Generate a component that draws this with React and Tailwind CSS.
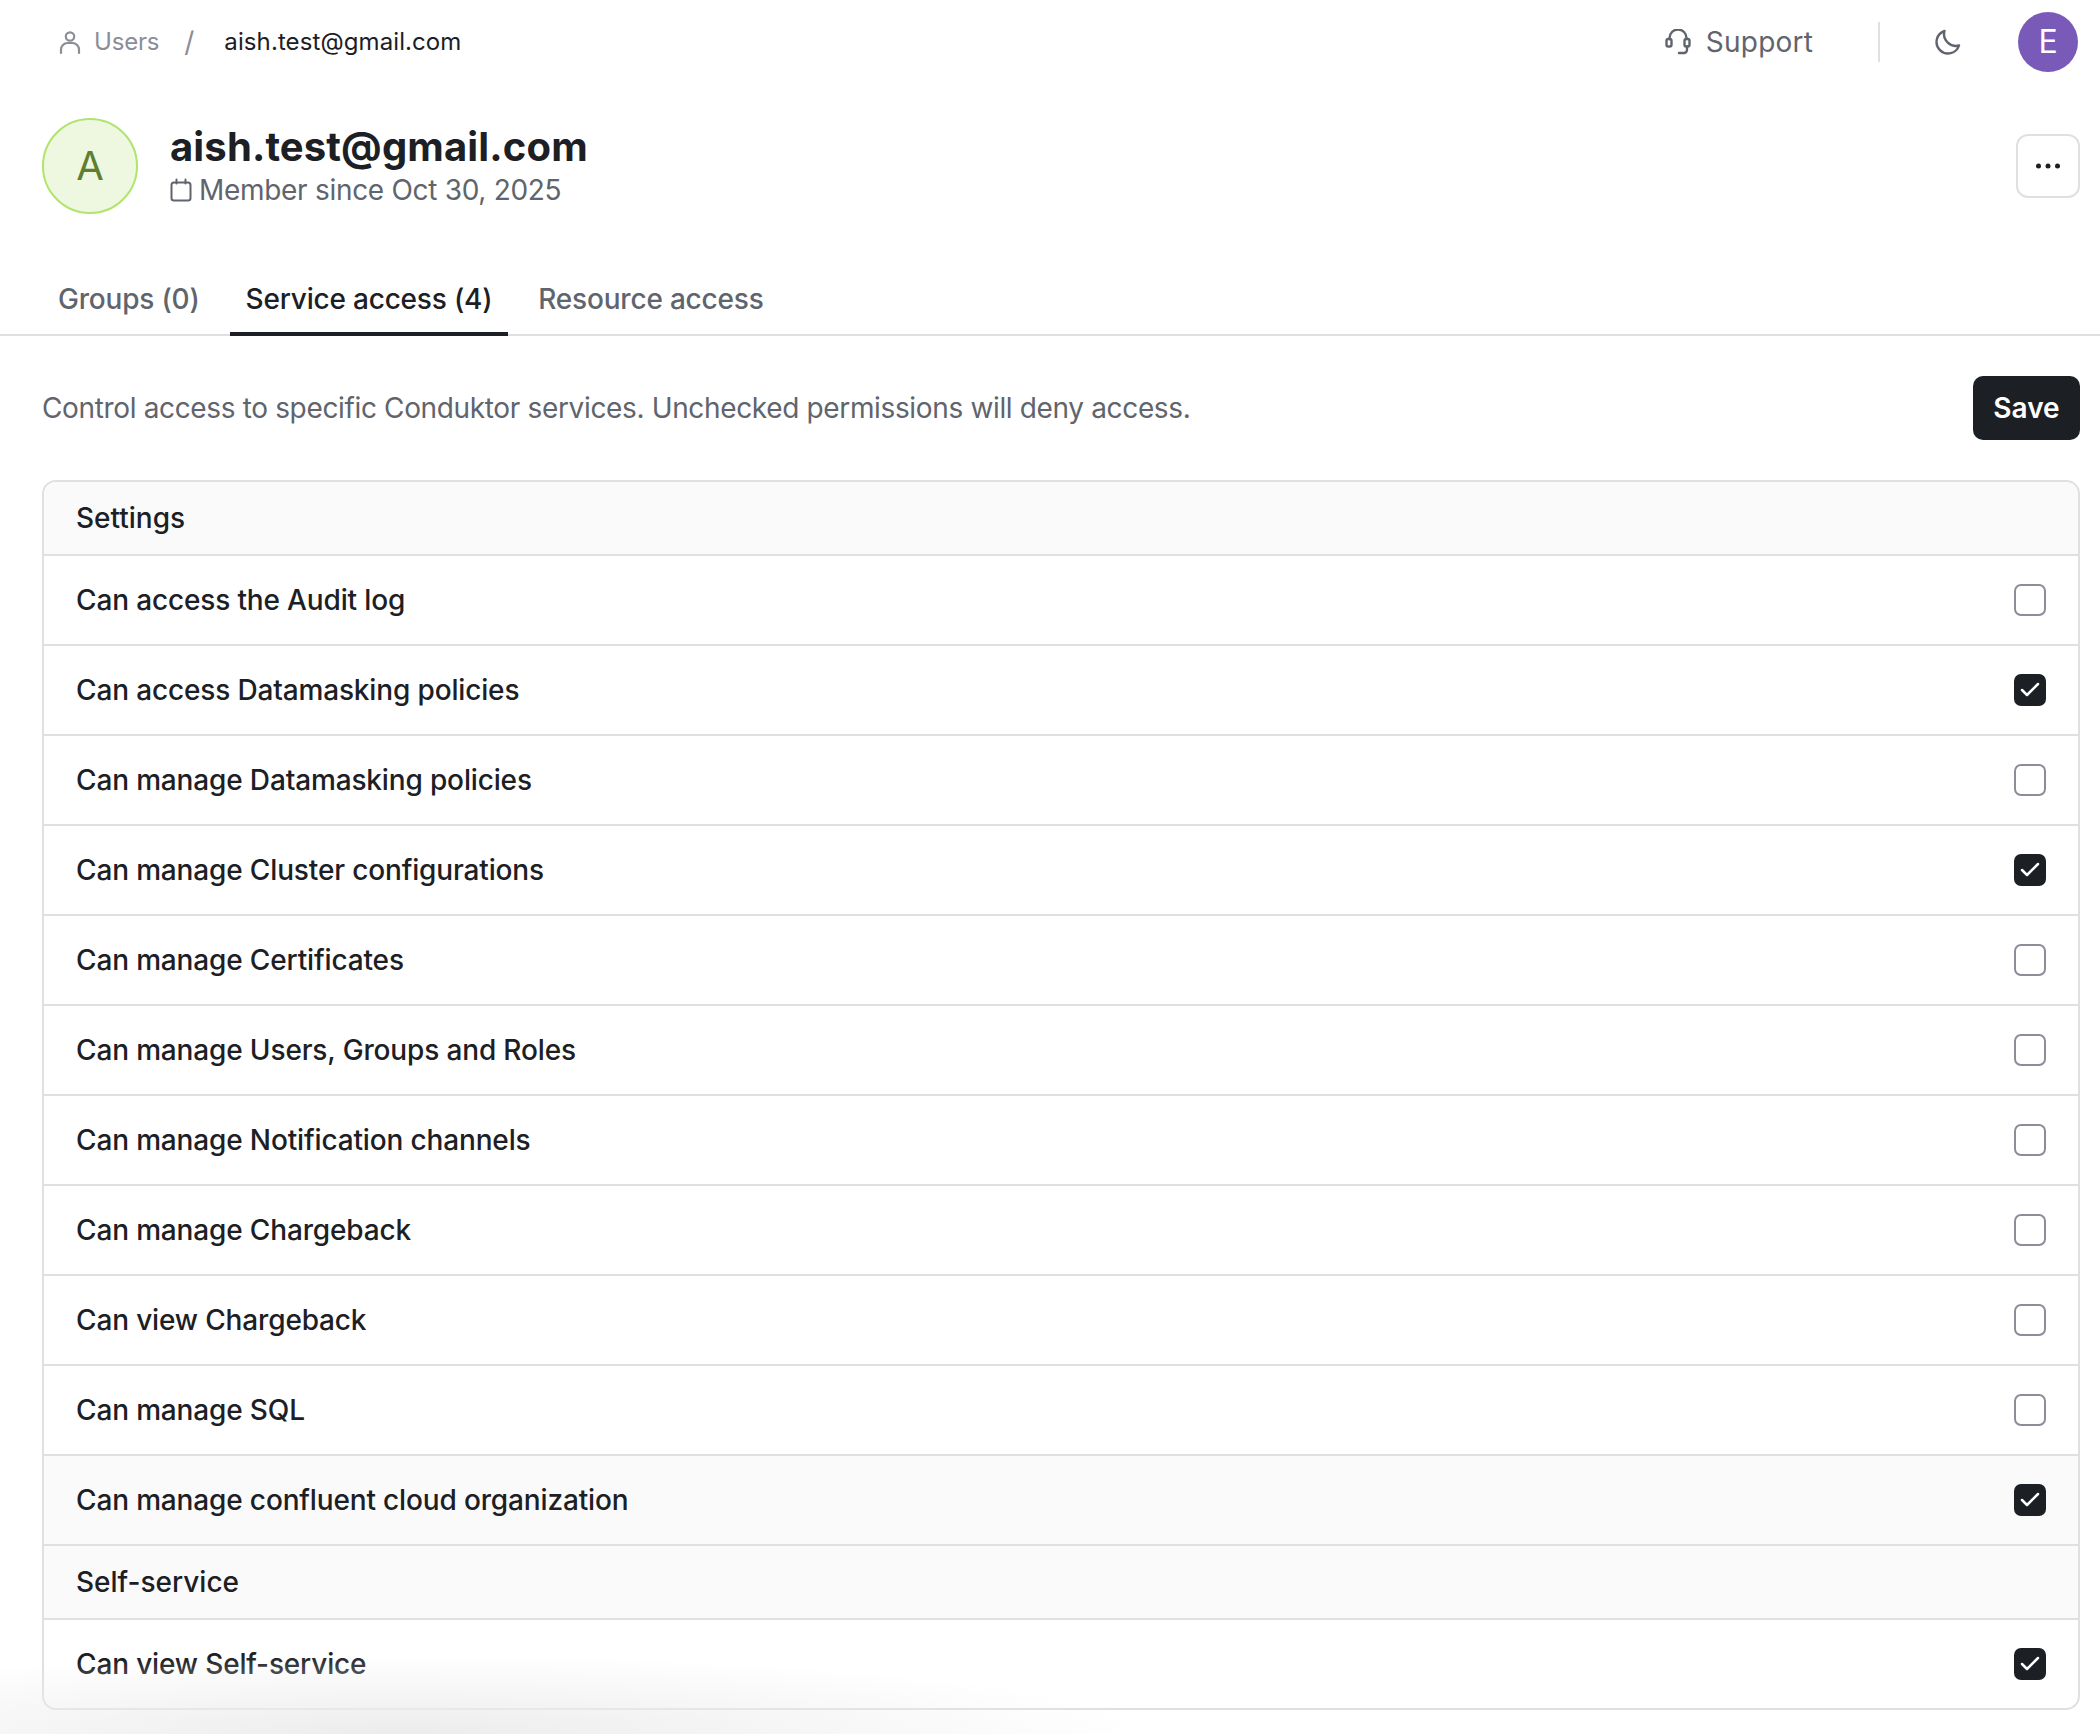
import { Check } from 'lucide-react';

const font = { fontFamily: 'Inter, sans-serif' };

const settings = [
  { label: 'Can access the Audit log', checked: false },
  { label: 'Can access Datamasking policies', checked: true },
  { label: 'Can manage Datamasking policies', checked: false },
  { label: 'Can manage Cluster configurations', checked: true },
  { label: 'Can manage Certificates', checked: false },
  { label: 'Can manage Users, Groups and Roles', checked: false },
  { label: 'Can manage Notification channels', checked: false },
  { label: 'Can manage Chargeback', checked: false },
  { label: 'Can view Chargeback', checked: false },
  { label: 'Can manage SQL', checked: false },
  { label: 'Can manage confluent cloud organization', checked: true, hover: true },
];

function UserIcon() {
  return (
    <svg width="24" height="26" viewBox="0 0 24 26" fill="none" stroke="#8b8d98" strokeWidth="2.2" strokeLinecap="round">
      <circle cx="12" cy="7.5" r="4.2" />
      <path d="M3 24v-3.5a6.5 6.5 0 0 1 6.5-6.5h5a6.5 6.5 0 0 1 6.5 6.5V24" />
    </svg>
  );
}

function HeadsetIcon() {
  return (
    <svg width="26" height="26" viewBox="0 0 26 26" fill="none" stroke="#60646c" strokeWidth="2.4" strokeLinecap="round" strokeLinejoin="round">
      <path d="M4.5 10V9a8.5 8.5 0 0 1 17 0v1" />
      <rect x="1.5" y="10" width="5" height="7.5" rx="1.8" />
      <rect x="19.5" y="10" width="5" height="7.5" rx="1.8" />
      <path d="M22 17.5V21a3 3 0 0 1-3 3h-5" />
    </svg>
  );
}

function MoonIcon() {
  return (
    <svg width="26" height="26" viewBox="0 0 26 26" fill="none" stroke="#60646c" strokeWidth="2.4" strokeLinejoin="round">
      <path d="M9.5 2a11.5 11.5 0 1 0 14.5 14.5C16 19 7 11 9.5 2Z" />
    </svg>
  );
}

function CalendarIcon() {
  return (
    <svg width="22" height="24" viewBox="0 0 22 24" fill="none" stroke="#60646c" strokeWidth="2" strokeLinecap="round" strokeLinejoin="round">
      <rect x="1.5" y="4.5" width="19" height="18" rx="2.5" />
      <path d="M6.5 1.5v4M15.5 1.5v4" />
    </svg>
  );
}

function DotsIcon() {
  return (
    <svg width="26" height="6" viewBox="0 0 26 6" fill="#1c2024">
      <circle cx="3.5" cy="3" r="2.5" />
      <circle cx="13" cy="3" r="2.5" />
      <circle cx="22.5" cy="3" r="2.5" />
    </svg>
  );
}

function Box({ checked }) {
  if (checked) {
    return (
      <div className="w-8 h-8 rounded-[7px] bg-[#1c2024] flex items-center justify-center">
        <Check className="w-6 h-6 text-white" strokeWidth={2.5} />
      </div>
    );
  }
  return <div className="w-8 h-8 rounded-[7px] border-2 border-[#8b8d98] bg-white" />;
}

function Row({ label, checked, hover, last }) {
  return (
    <div className={`flex items-center justify-between pl-8 pr-8 ${last ? 'h-[88px]' : 'h-[90px] border-b-2 border-[#e0e0e0]'} ${hover ? 'bg-[#fafafa]' : ''}`}>
      <span className="text-[28px] font-medium tracking-[-0.15px] text-[#1c2024]">{label}</span>
      <Box checked={checked} />
    </div>
  );
}

function GroupHeader({ title }) {
  return (
    <div className="flex items-center h-[74px] pl-8 bg-[#fafafa] border-b-2 border-[#e0e0e0]">
      <span className="text-[28px] font-medium text-[#1c2024]">{title}</span>
    </div>
  );
}

export default function App() {
  return (
    <div style={font} className="relative w-[2100px] h-[1734px] bg-white overflow-hidden">
      {/* Top bar */}
      <div className="flex items-center justify-between h-[84px] pl-[58px] pr-[22px]">
        <div className="flex items-center text-[24px]">
          <UserIcon />
          <span className="ml-[12px] text-[#8b8d98] tracking-[-0.2px]">Users</span>
          <span className="ml-[25px] text-[28px] leading-none text-[#8b8d98]">/</span>
          <span className="ml-[30px] text-[#1c2024] tracking-[0.1px]">aish.test@gmail.com</span>
        </div>
        <div className="flex items-center">
          <HeadsetIcon />
          <span className="ml-[15px] text-[28px] tracking-[0.2px] text-[#60646c]">Support</span>
          <div className="ml-[65px] w-[2px] h-10 bg-[#e0e0e0]" />
          <div className="ml-[55px]"><MoonIcon /></div>
          <div className="ml-[57px] w-[60px] h-[60px] rounded-full bg-[#7a5ab8] flex items-center justify-center text-[32px] text-white">E</div>
        </div>
      </div>

      {/* Profile header */}
      <div className="mt-[34px] flex items-center justify-between pl-[42px] pr-[20px]">
        <div className="flex items-center">
          <div className="w-[96px] h-[96px] rounded-full bg-[#eef8e0] border-2 border-[#b0e46c] flex items-center justify-center text-[40px] text-[#5f7f30]">A</div>
          <div className="ml-[32px]">
            <h1 className="text-[40px] leading-[44px] font-bold tracking-[0.14px] text-[#1c2024]">aish.test@gmail.com</h1>
            <div className="mt-[3px] flex items-center text-[28px] leading-[36px] tracking-[-0.3px] text-[#60646c]">
              <CalendarIcon />
              <span className="ml-[7px]">Member since Oct 30, 2025</span>
            </div>
          </div>
        </div>
        <button className="w-[64px] h-[64px] rounded-[12px] border-2 border-[#e0e0e0] flex items-center justify-center">
          <DotsIcon />
        </button>
      </div>

      {/* Tabs */}
      <div className="mt-[46px] h-[76px] flex items-stretch gap-[14px] pl-[42px] border-b-2 border-[#e0e0e0]">
        <div className="px-4 pt-[3px] flex items-center text-[28px] font-medium tracking-[-0.2px] text-[#60646c]">Groups (0)</div>
        <div className="px-4 pt-[5px] flex items-center text-[28px] font-medium tracking-[-0.2px] text-[#1c2024] border-b-4 border-[#1c2024] -mb-[2px]">Service access (4)</div>
        <div className="px-4 pt-[3px] flex items-center text-[28px] font-medium tracking-[-0.2px] text-[#60646c]">Resource access</div>
      </div>

      {/* Description + save */}
      <div className="mt-[40px] flex items-center justify-between pl-[42px] pr-[20px]">
        <p className="text-[28px] tracking-[-0.35px] text-[#60646c]">Control access to specific Conduktor services. Unchecked permissions will deny access.</p>
        <button className="w-[107px] h-[64px] rounded-[10px] bg-[#1c2024] text-white text-[28px] font-semibold">Save</button>
      </div>

      {/* Permissions table */}
      <div className="mt-[40px] ml-[42px] w-[2038px] rounded-[14px] border-2 border-[#e0e0e0] overflow-hidden">
        <GroupHeader title="Settings" />
        {settings.map((s) => (
          <Row key={s.label} {...s} />
        ))}
        <GroupHeader title="Self-service" />
        <Row label="Can view Self-service" checked last />
      </div>

      {/* faint fade in the bottom-left corner */}
      <div className="absolute left-0 bottom-0 w-[1150px] h-[80px] bg-[radial-gradient(ellipse_farthest-side_at_35%_100%,#ececec,transparent)] pointer-events-none" />
    </div>
  );
}
